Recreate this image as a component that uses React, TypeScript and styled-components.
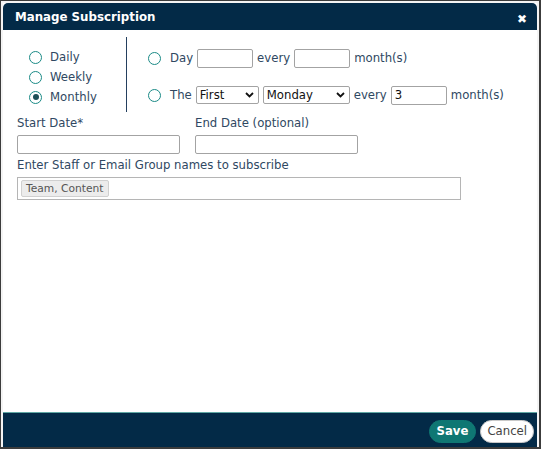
import React from "react";
import styled, { createGlobalStyle } from "styled-components";

const Global = createGlobalStyle`
  html, body { margin: 0; padding: 0; background: #ffffff; overflow: hidden; }
  * { box-sizing: border-box; }
`;

const FONT = `"DejaVu Sans", Verdana, sans-serif`;
const NAVY = "#032a47";
const TEAL = "#1a8a86";
const LABEL = "#2f4862";

const Frame = styled.div`
  width: 541px;
  height: 449px;
  border-style: solid;
  border-color: #3c3c3c;
  border-width: 1px 2px 2px 1px;
  padding: 2px 2px 0 2px;
  background: #f4f4f4;
  font-family: ${FONT};
`;

const Dialog = styled.div`
  display: flex;
  flex-direction: column;
  height: 100%;
  background: #ffffff;
`;

const Header = styled.div`
  height: 27px;
  flex: none;
  display: flex;
  align-items: center;
  justify-content: space-between;
  padding: 1px 10px 0 12px;
  background: ${NAVY};
  border-radius: 5px 5px 0 0;
  color: #ffffff;
`;

const Title = styled.div`
  font-size: 11.8px;
  font-weight: bold;
`;

const Close = styled.span`
  font-size: 12px;
  font-weight: bold;
  line-height: 1;
  margin-top: 3px;
`;

const Body = styled.div`
  flex: 1;
  padding: 7px 0 0 0;
`;

const Recurrence = styled.div`
  display: flex;
  height: 75px;
`;

const FreqColumn = styled.div`
  width: 123px;
  padding: 10px 0 0 26px;
  display: flex;
  flex-direction: column;
`;

const Divider = styled.div`
  width: 1px;
  background: #243f5e;
`;

const PatternColumn = styled.div`
  padding: 11px 0 0 21px;
  display: flex;
  flex-direction: column;
  gap: 17px;
`;

const RadioRow = styled.div`
  height: 20px;
  display: flex;
  align-items: center;
  gap: 8px;
  font-size: 11.7px;
  color: ${LABEL};
`;

const PatternRow = styled.div`
  height: 20px;
  display: flex;
  align-items: center;
  gap: 4px;
  font-size: 11.7px;
  color: ${LABEL};
`;

const Radio = styled.span<{ $checked?: boolean }>`
  width: 13px;
  height: 13px;
  border-radius: 50%;
  border: 1.5px solid ${TEAL};
  display: inline-flex;
  align-items: center;
  justify-content: center;
  flex: none;
  &::after {
    content: "";
    width: 6px;
    height: 6px;
    border-radius: 50%;
    background: ${(p) => (p.$checked ? "#1d4f57" : "transparent")};
  }
`;

const RadioGap = styled.span`
  width: 1px;
`;

const SmallInput = styled.div<{ $w: number }>`
  width: ${(p) => p.$w}px;
  height: 19px;
  border: 1px solid #a3a3a3;
  border-radius: 2px;
  background: #fff;
  font-size: 11.7px;
  color: #111;
  padding: 1px 3px;
  line-height: 15px;
`;

const Select = styled.div<{ $w: number }>`
  width: ${(p) => p.$w}px;
  height: 18px;
  border: 1px solid #a3a3a3;
  border-radius: 2px;
  background: #fff;
  font-size: 11.7px;
  color: #111;
  padding: 0 4px 0 3px;
  display: flex;
  align-items: center;
  justify-content: space-between;
`;

const Chevron = () => (
  <svg width="9" height="6" viewBox="0 0 9 6">
    <path d="M1 1 L4.5 4.5 L8 1" fill="none" stroke="#111" strokeWidth="1.8" />
  </svg>
);

const Fields = styled.div`
  padding: 3px 0 0 14px;
  display: flex;
  flex-direction: column;
`;

const DateRow = styled.div`
  display: flex;
  gap: 15px;
`;

const Field = styled.div`
  display: flex;
  flex-direction: column;
`;

const Label = styled.div`
  font-size: 11.7px;
  color: ${LABEL};
  height: 17px;
  line-height: 17px;
  margin-bottom: 3px;
`;

const DateInput = styled.div`
  width: 163px;
  height: 19px;
  border: 1px solid #a3a3a3;
  border-radius: 2px;
  background: #fff;
`;

const StaffLabel = styled(Label)`
  margin-top: 3px;
`;

const TagBox = styled.div`
  width: 444px;
  height: 23px;
  border: 1px solid #b5b5b5;
  background: #fff;
  padding: 2px 3px;
  display: flex;
  align-items: center;
`;

const Tag = styled.span`
  height: 17px;
  display: inline-flex;
  align-items: center;
  padding: 0 4px;
  border: 1px solid #d0d0d0;
  border-radius: 2px;
  background: #ececec;
  color: #555;
  font-size: 10.7px;
`;

const Footer = styled.div`
  height: 35px;
  flex: none;
  background: ${NAVY};
  border-top: 1px solid #5fa7a4;
  display: flex;
  align-items: center;
  justify-content: flex-end;
  gap: 4px;
  padding: 2px 3px 0 0;
`;

const Button = styled.button<{ $primary?: boolean }>`
  height: 23px;
  border-radius: 12px;
  font-family: ${FONT};
  font-size: 11.7px;
  padding: 0 ${(p) => (p.$primary ? 7 : 6)}px;
  cursor: pointer;
  border: 1px solid ${(p) => (p.$primary ? "#0f7773" : "#c9c9c9")};
  background: ${(p) => (p.$primary ? "#0f7773" : "#ffffff")};
  color: ${(p) => (p.$primary ? "#ffffff" : "#444")};
  font-weight: ${(p) => (p.$primary ? 600 : "normal")};
`;

export default function App() {
  return (
    <>
      <Global />
      <Frame>
        <Dialog>
          <Header>
            <Title>Manage Subscription</Title>
            <Close>✖</Close>
          </Header>
          <Body>
            <Recurrence>
              <FreqColumn>
                <RadioRow>
                  <Radio />
                  Daily
                </RadioRow>
                <RadioRow>
                  <Radio />
                  Weekly
                </RadioRow>
                <RadioRow>
                  <Radio $checked />
                  Monthly
                </RadioRow>
              </FreqColumn>
              <Divider />
              <PatternColumn>
                <PatternRow>
                  <Radio />
                  <RadioGap />
                  Day
                  <SmallInput $w={56} />
                  every
                  <SmallInput $w={56} />
                  month(s)
                </PatternRow>
                <PatternRow>
                  <Radio />
                  <RadioGap />
                  The
                  <Select $w={63}>
                    First
                    <Chevron />
                  </Select>
                  <Select $w={87}>
                    Monday
                    <Chevron />
                  </Select>
                  every
                  <SmallInput $w={56}>3</SmallInput>
                  month(s)
                </PatternRow>
              </PatternColumn>
            </Recurrence>
            <Fields>
              <DateRow>
                <Field>
                  <Label>Start Date*</Label>
                  <DateInput />
                </Field>
                <Field>
                  <Label>End Date (optional)</Label>
                  <DateInput />
                </Field>
              </DateRow>
              <StaffLabel>Enter Staff or Email Group names to subscribe</StaffLabel>
              <TagBox>
                <Tag>Team, Content</Tag>
              </TagBox>
            </Fields>
          </Body>
          <Footer>
            <Button $primary>Save</Button>
            <Button>Cancel</Button>
          </Footer>
        </Dialog>
      </Frame>
    </>
  );
}
